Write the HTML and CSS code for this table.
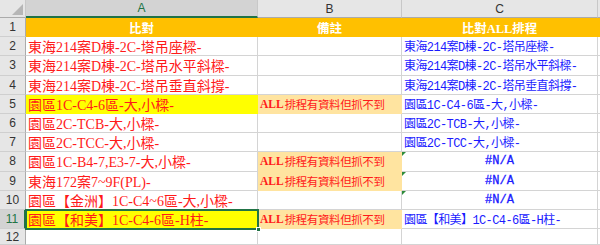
FILE: index.html
```html
<!DOCTYPE html>
<html lang="zh-Hant">
<head>
<meta charset="utf-8">
<title>比對</title>
<link rel="stylesheet" href="styles.css">
</head>
<body>
<div class="sheet">
  <div class="corner"></div>
  <div class="colhead sel">A</div>
  <div class="colhead">B</div>
  <div class="colhead">C</div>
  <div class="colhead"></div>

  <div class="rowhead">1</div>
  <div class="cell title">比對</div>
  <div class="cell title">備註</div>
  <div class="cell title">比對ALL排程</div>
  <div class="cell title"></div>

  <div class="rowhead">2</div>
  <div class="cell a">東海214案D棟-2C-塔吊座樑-</div>
  <div class="cell b"></div>
  <div class="cell c">東海214案D棟-2C-塔吊座樑-</div>
  <div class="cell"></div>

  <div class="rowhead">3</div>
  <div class="cell a">東海214案D棟-2C-塔吊水平斜樑-</div>
  <div class="cell b"></div>
  <div class="cell c">東海214案D棟-2C-塔吊水平斜樑-</div>
  <div class="cell"></div>

  <div class="rowhead">4</div>
  <div class="cell a">東海214案D棟-2C-塔吊垂直斜撐-</div>
  <div class="cell b"></div>
  <div class="cell c">東海214案D棟-2C-塔吊垂直斜撐-</div>
  <div class="cell"></div>

  <div class="rowhead">5</div>
  <div class="cell a yellow">園區1C-C4-6區-大,小樑-</div>
  <div class="cell b note"><span class="lat">ALL</span>排程有資料但抓不到</div>
  <div class="cell c">園區1C-C4-6區-大,小樑-</div>
  <div class="cell"></div>

  <div class="rowhead">6</div>
  <div class="cell a">園區2C-TCB-大,小樑-</div>
  <div class="cell b"></div>
  <div class="cell c">園區2C-TCB-大,小樑-</div>
  <div class="cell"></div>

  <div class="rowhead">7</div>
  <div class="cell a">園區2C-TCC-大,小樑-</div>
  <div class="cell b"></div>
  <div class="cell c">園區2C-TCC-大,小樑-</div>
  <div class="cell"></div>

  <div class="rowhead">8</div>
  <div class="cell a">園區1C-B4-7,E3-7-大,小樑-</div>
  <div class="cell b note"><span class="lat">ALL</span>排程有資料但抓不到</div>
  <div class="cell c na err">#N/A</div>
  <div class="cell"></div>

  <div class="rowhead">9</div>
  <div class="cell a">東海172案7~9F(PL)-</div>
  <div class="cell b note"><span class="lat">ALL</span>排程有資料但抓不到</div>
  <div class="cell c na err">#N/A</div>
  <div class="cell"></div>

  <div class="rowhead">10</div>
  <div class="cell a">園區【金洲】1C-C4~6區-大,小樑-</div>
  <div class="cell b"></div>
  <div class="cell c na err">#N/A</div>
  <div class="cell"></div>

  <div class="rowhead sel">11</div>
  <div class="cell a yellow active">園區【和美】1C-C4-6區-H柱-</div>
  <div class="cell b note"><span class="lat">ALL</span>排程有資料但抓不到</div>
  <div class="cell c">園區【和美】1C-C4-6區-H柱-</div>
  <div class="cell"></div>

  <div class="rowhead">12</div>
  <div class="cell"></div>
  <div class="cell"></div>
  <div class="cell"></div>
  <div class="cell"></div>
</div>
</body>
</html>
```

FILE: styles.css
```css
html, body {
  margin: 0;
  padding: 0;
  background: #ffffff;
  overflow: hidden;
}

.sheet {
  display: grid;
  grid-template-columns: 26px 232px 144px 196px 1fr;
  grid-template-rows: 18px repeat(11, 19.2px) 1fr;
  width: 600px;
  height: 245px;
  overflow: hidden;
}

.sheet > div {
  box-sizing: border-box;
  border-right: 1px solid #d4d4d4;
  border-bottom: 1px solid #d4d4d4;
  white-space: nowrap;
  overflow: visible;
  display: flex;
  align-items: center;
}

.corner {
  background: #e6e6e6;
  position: relative;
  border-right-color: #c8c8c8 !important;
  border-bottom-color: #ababab !important;
}

.corner::after {
  content: "";
  position: absolute;
  right: 2px;
  bottom: 2px;
  width: 0;
  height: 0;
  border-left: 11px solid transparent;
  border-bottom: 11px solid #b6b6b6;
}

.colhead {
  background: #e6e6e6;
  justify-content: center;
  font-family: "Liberation Sans", Arial, sans-serif;
  font-size: 12px;
  color: #333333;
  border-right-color: #c8c8c8 !important;
  border-bottom-color: #ababab !important;
}

.colhead.sel {
  background: #d3d3d3;
  color: #217346;
  border-bottom: 2px solid #217346 !important;
}

.rowhead {
  background: #e6e6e6;
  justify-content: center;
  font-family: "Liberation Sans", Arial, sans-serif;
  font-size: 12px;
  color: #333333;
  border-right-color: #ababab !important;
  border-bottom-color: #cfcfcf !important;
}

.rowhead.sel {
  background: #d3d3d3;
  color: #217346;
  border-right: 2px solid #217346 !important;
}

.cell {
  padding-left: 2px;
  font-size: 14px;
}

.title {
  background: #ffc000;
  border-right-color: transparent !important;
  border-bottom-color: transparent !important;
  justify-content: center;
  color: #ffffff;
  font-weight: bold;
  font-size: 12.5px;
  font-family: "Liberation Serif", "Noto Sans CJK TC", serif;
  padding-left: 0;
}

.a {
  font-family: "Liberation Serif", "Noto Sans CJK TC", serif;
  font-size: 14px;
  color: #ff1a1a;
}

.b {
  font-family: "Noto Sans CJK TC", sans-serif;
  font-size: 11.5px;
  color: #ff1a1a;
  letter-spacing: -0.4px;
}

.lat {
  font-family: "Liberation Serif", serif;
  font-weight: bold;
  letter-spacing: 0;
  margin-right: 1px;
}

.c {
  font-family: "Liberation Mono", "Noto Sans CJK TC", monospace;
  font-size: 12px;
  color: #1a1aff;
  letter-spacing: -0.6px;
}

.yellow {
  background: #ffff00;
  border-right-color: transparent !important;
  border-bottom-color: transparent !important;
}

.note {
  background: #ffe4a0;
  border-right-color: transparent !important;
  border-bottom-color: transparent !important;
}

.na {
  justify-content: center;
  letter-spacing: 0;
  padding-left: 0;
  -webkit-text-stroke: 0.3px #1a1aff;
}

.err {
  position: relative;
}

.err::before {
  content: "";
  position: absolute;
  left: 0;
  top: 0;
  width: 0;
  height: 0;
  border-top: 4px solid #2e8b3a;
  border-right: 4px solid transparent;
}

.active {
  position: relative;
  z-index: 2;
  outline: 2px solid #217346;
  outline-offset: -1px;
}

.active::after {
  content: "";
  position: absolute;
  right: -4px;
  bottom: -4px;
  width: 5px;
  height: 5px;
  background: #217346;
  border: 1px solid #ffffff;
  box-sizing: border-box;
}
```
